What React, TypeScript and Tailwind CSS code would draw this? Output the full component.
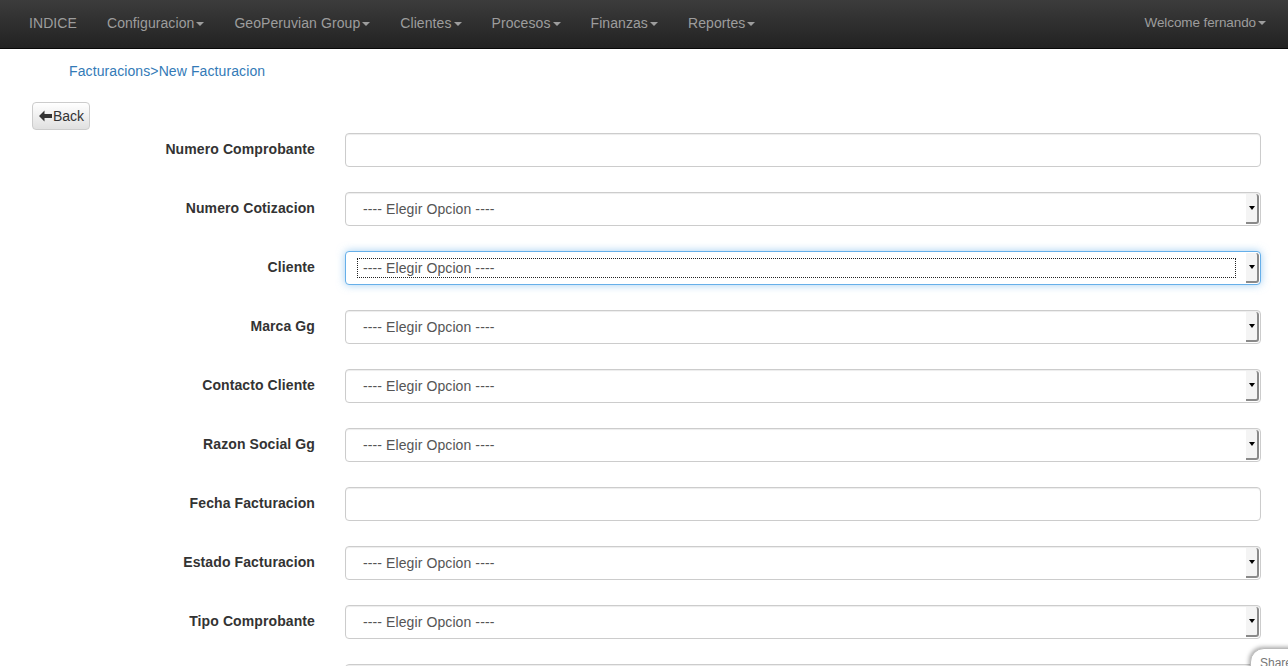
import { ReactNode } from "react";

const navItems = ["Configuracion", "GeoPeruvian Group", "Clientes", "Procesos", "Finanzas", "Reportes"];

type Field = { label: string; kind: "text" | "select"; focused?: boolean };

const fields: Field[] = [
    { label: "Numero Comprobante", kind: "text" },
    { label: "Numero Cotizacion", kind: "select" },
    { label: "Cliente", kind: "select", focused: true },
    { label: "Marca Gg", kind: "select" },
    { label: "Contacto Cliente", kind: "select" },
    { label: "Razon Social Gg", kind: "select" },
    { label: "Fecha Facturacion", kind: "text" },
    { label: "Estado Facturacion", kind: "select" },
    { label: "Tipo Comprobante", kind: "select" },
    { label: "", kind: "text" },
];

function Caret() {
    return <span className="inline-block ml-[2px] align-middle w-0 h-0 border-t-[4px] border-t-[#9d9d9d] border-x-[4px] border-x-transparent" />;
}

function NavLink({ children, caret = true, className = "text-[14px] tracking-[0.08px]" }: { children: ReactNode; caret?: boolean; className?: string }) {
    return (
        <a className={`px-[15px] leading-[20px] py-[12px] text-[#9d9d9d] cursor-pointer whitespace-nowrap ${className}`}>
            {children}
            {caret && <Caret />}
        </a>
    );
}

function SelectBox({ focused }: { focused?: boolean }) {
    return (
        <div
            className={`relative flex items-center h-[34px] w-full rounded-[4px] border bg-white ${focused ? "border-[#66afe9] shadow-[0_0_8px_rgba(102,175,233,0.6)]" : "border-[#ccc] shadow-[inset_0_1px_1px_rgba(0,0,0,0.075)]"}`}
        >
            <div className={`flex-1 ml-[11px] mr-[24px] h-[20px] flex items-center pl-[5px] ${focused ? "border border-dotted border-[#222]" : "border border-transparent"}`}>
                <span className="text-[14px] text-[#555] tracking-[0.1px]">---- Elegir Opcion ----</span>
            </div>
            <div className="absolute right-[1px] top-[1px] bottom-[1px] w-[13px] bg-[#f4f4f4] border-r-[2px] border-b-[2px] border-[#8a8a8a] rounded-r-[3px] flex items-center justify-center">
                <span className="w-0 h-0 border-t-[4px] border-t-black border-x-[3px] border-x-transparent" />
            </div>
        </div>
    );
}

export default function App() {
    return (
        <div className="h-[666px] overflow-hidden relative bg-white text-[#333]" style={{ fontFamily: '"Liberation Sans", Arial, sans-serif' }}>
            <nav className="h-[49px] flex items-center justify-between bg-gradient-to-b from-[#3c3c3c] to-[#222] border-b border-[#080808] pl-[14px] pr-[7px] pb-[2px]">
                <div className="flex items-center">
                    <NavLink caret={false}>INDICE</NavLink>
                    {navItems.map((item) => (
                        <NavLink key={item}>{item}</NavLink>
                    ))}
                </div>
                <NavLink className="text-[13.5px] tracking-[-0.1px]">Welcome fernando</NavLink>
            </nav>

            <div className="pl-[69px] pt-[12px] text-[14px] leading-[20px] tracking-[0.1px] text-[#337ab7]">
                <a>Facturacions</a>&gt;<a>New Facturacion</a>
            </div>

            <div className="pl-[32px] mt-[21px]">
                <button className="h-[28px] pl-[6px] pr-[5px] flex items-center rounded-[4px] border border-[#ccc] bg-gradient-to-b from-white to-[#e0e0e0] text-[14px] text-[#333]">
                    <svg width="13" height="12" viewBox="0 0 13 12" className="mr-[1px]">
                        <path d="M0 6 L5.5 0.5 L5.5 4 L13 4 L13 8 L5.5 8 L5.5 11.5 Z" fill="#333" />
                    </svg>
                    Back
                </button>
            </div>

            <form className="mt-[3px] pr-[27px]">
                {fields.map((f, i) => (
                    <div key={i} className="flex items-center mb-[25px]">
                        <label className="w-[315px] text-right text-[14px] font-bold text-[#333] tracking-[0.1px] shrink-0 mt-[-2px]">{f.label}</label>
                        <div className="ml-[30px] flex-1">
                            {f.kind === "text" ? (
                                <div className="h-[34px] w-full rounded-[4px] border border-[#ccc] bg-white shadow-[inset_0_1px_1px_rgba(0,0,0,0.075)]" />
                            ) : (
                                <SelectBox focused={f.focused} />
                            )}
                        </div>
                    </div>
                ))}
            </form>

            <div className="absolute right-[-20px] top-[648px] w-[58px] h-[30px] bg-white border border-[#bbb] rounded-tl-[14px] shadow-[-1px_-1px_4px_rgba(0,0,0,0.35)] pl-[9px] pt-[5px] text-[12px] text-[#777]">
                Share
            </div>
        </div>
    );
}
